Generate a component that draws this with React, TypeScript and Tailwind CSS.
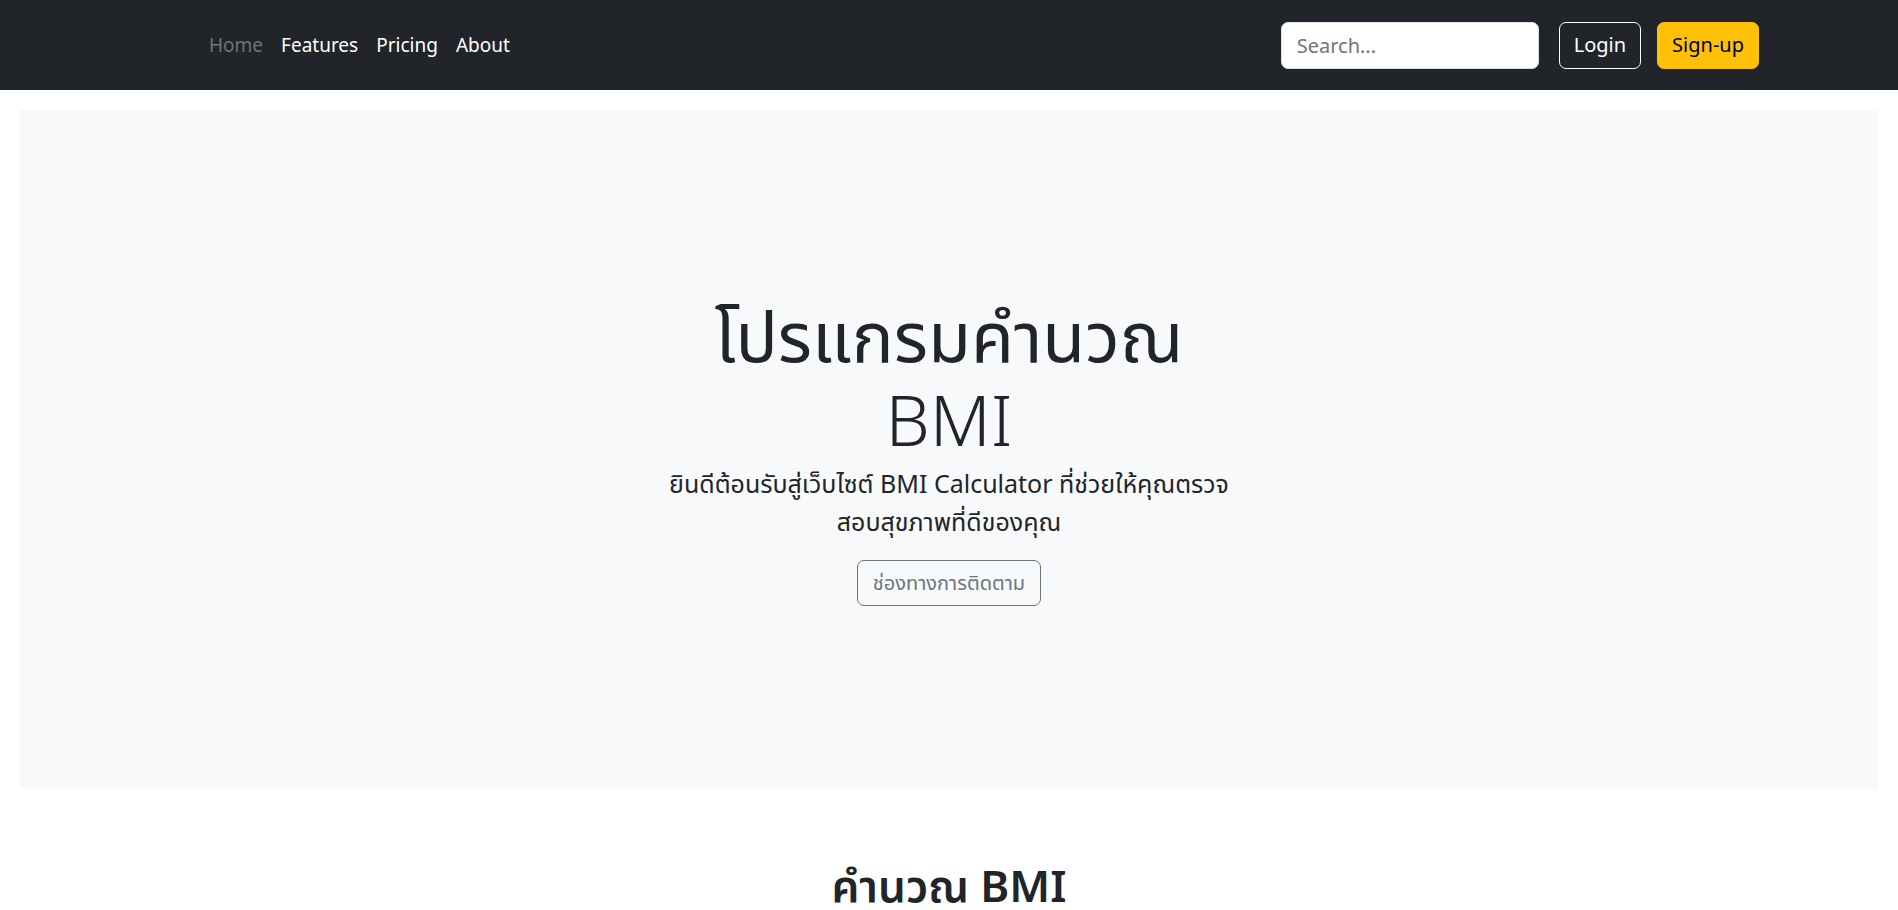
import React from "react";

const font = { fontFamily: '"Segoe UI", "Noto Sans", "Noto Sans Thai", "Leelawadee UI", Tahoma, sans-serif' };

const links = ["Home", "Features", "Pricing", "About"];

const App = () => {
  return (
    <div className="min-h-screen bg-white text-[#212529]" style={font}>
      <header className="bg-[#212529] h-[90px]">
        <div className="mx-auto w-[1620px] h-full flex items-center">
          <nav className="ml-[61px] flex items-center text-[19px]">
            {links.map((l, i) => (
              <a key={l} href="#" className={"px-[9px] " + (i === 0 ? "text-[#6c757d]" : "text-white")}>
                {l}
              </a>
            ))}
          </nav>
          <div className="ml-auto flex items-center">
            <input
              type="search"
              placeholder="Search..."
              className="w-[258px] h-[47px] rounded-[7px] bg-white border border-[#dee2e6] px-[15px] text-[20px] text-[#212529] placeholder:text-[#6c757d] outline-none"
            />
            <button className="ml-[20px] h-[47px] px-[14px] rounded-[7px] border border-white text-white text-[20px]">
              Login
            </button>
            <button className="ml-[16px] h-[47px] px-[14px] rounded-[7px] bg-[#ffc107] border border-[#ffc107] text-black text-[20px]">
              Sign-up
            </button>
          </div>
        </div>
      </header>

      <section className="mx-[20px] mt-[20px] h-[679px] bg-[#f8f9fa] flex items-center justify-center">
        <div className="w-[560px] flex flex-col items-center text-center">
          <h1 className="text-[70px] leading-[84px] font-normal text-[#212529] mb-[4px]">
            โปรแกรมคำนวณ
            <br />
            <span className="font-light">BMI</span>
          </h1>
          <p className="text-[25px] leading-[37.5px] text-[#212529]">
            ยินดีต้อนรับสู่เว็บไซต์ BMI Calculator ที่ช่วยให้คุณตรวจ
            <br />
            สอบสุขภาพที่ดีของคุณ
          </p>
          <button className="mt-[20px] h-[46px] px-[15px] rounded-[7px] border border-[#6c757d] text-[#6c757d] text-[20px]">
            ช่องทางการติดตาม
          </button>
        </div>
      </section>

      <h2 className="mt-[70px] text-center text-[44px] leading-[52px] font-semibold text-[#212529]">คำนวณ BMI</h2>
    </div>
  );
};

export default App;
